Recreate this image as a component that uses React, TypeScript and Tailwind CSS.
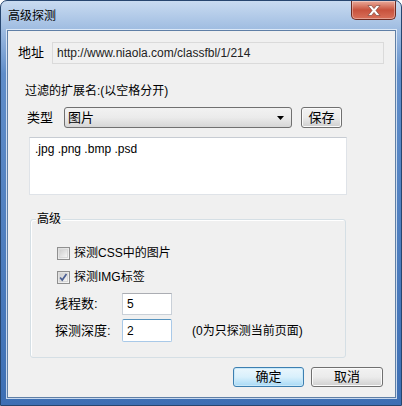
import React from 'react';

// Win7 style "高级探测" dialog

const FONT = { fontFamily: '"Liberation Sans", "Noto Sans CJK SC", sans-serif' };

function Checkbox({ checked }: { checked?: boolean }) {
  return (
    <span className="relative flex h-[13px] w-[13px] items-center justify-center border border-[#8f8f8f] bg-gradient-to-br from-[#dcdcdc] to-[#f8f8f8]">
      <span className="h-[9px] w-[9px] border border-[#d8d8d8] bg-gradient-to-br from-[#cfcfcf] to-[#f4f4f4]" />
      {checked && (
        <svg viewBox="0 0 13 13" className="absolute left-0 top-0 h-[11px] w-[11px]">
          <path d="M2.5 6.5 L5 9.5 L10 2.5" fill="none" stroke="#4b5f93" strokeWidth="2" />
        </svg>
      )}
    </span>
  );
}

function WinButton({ label, primary, className }: { label: string; primary?: boolean; className?: string }) {
  return (
    <div
      className={
        'flex items-center justify-center rounded-[3px] border text-[13px] text-black ' +
        (primary
          ? 'border-[#3c7fb1] bg-gradient-to-b from-[#eaf6fd] via-[#d9f0fc] to-[#a7d9f5] shadow-[inset_0_0_0_1px_#c9e8f8]'
          : 'border-[#707070] bg-gradient-to-b from-[#f2f2f2] via-[#ebebeb] to-[#cfcfcf] shadow-[inset_0_0_0_1px_#fbfbfb]') +
        ' ' +
        (className ?? '')
      }
    >
      {label}
    </div>
  );
}

export default function App() {
  return (
    <div
      style={FONT}
      className="h-[406px] w-[402px] overflow-hidden rounded-t-[7px] border border-[#27466f] bg-gradient-to-b from-[#c9dbf0] via-[#5f8dc9] via-[18%] to-[#3d6fb4] text-[12px] text-black"
    >
      {/* Title bar */}
      <div className="flex h-[29px] items-start justify-between">
        <div className="pl-[7px] pt-[7px] text-[12px] leading-[16px] text-black">高级探测</div>
        <div className="mr-[5px] flex h-[19px] w-[45px] items-center justify-center rounded-b-[5px] border border-t-0 border-[#6e2a20] bg-gradient-to-b from-[#e9a99a] via-[#c8523d] to-[#d9705a] shadow-[inset_0_0_0_1px_rgba(255,255,255,0.35)]">
          <svg viewBox="0 0 14 11" className="h-[11px] w-[14px]">
            <path
              d="M1 0.5 H4.5 L7 3.6 L9.5 0.5 H13 L8.9 5.5 L13 10.5 H9.5 L7 7.4 L4.5 10.5 H1 L5.1 5.5 Z"
              fill="#ffffff"
              stroke="#6d3a33"
              strokeWidth="0.6"
            />
          </svg>
        </div>
      </div>

      {/* Client area */}
      <div className="ml-[6px] h-[368px] w-[389px] border border-[#5f7fa6] bg-[#f0f0f0] shadow-[0_0_0_1px_rgba(235,243,252,0.8)]">
        {/* Address */}
        <div className="mt-[11px] flex h-[22px] items-center pl-[10px]">
          <span className="w-[34px] text-[13px]">地址</span>
          <div className="flex h-[22px] w-[332px] items-center border border-[#dadada] bg-[#f0f0f0] pl-[4px] text-[12px] text-[#222]">
            http://www.niaola.com/classfbl/1/214
          </div>
        </div>

        {/* Filter label */}
        <div className="mt-[19px] pl-[17px] leading-[16px]">过滤的扩展名:(以空格分开)</div>

        {/* Type row */}
        <div className="mt-[8px] flex h-[21px] items-center pl-[19px]">
          <span className="w-[37px] text-[13px]">类型</span>
          <div className="flex h-[21px] w-[228px] items-center justify-between rounded-[3px] border border-[#707070] bg-gradient-to-b from-[#f2f2f2] via-[#ebebeb] to-[#d6d6d6] pl-[3px] pr-[7px] text-[13px]">
            <span>图片</span>
            <svg viewBox="0 0 7 4" className="h-[4px] w-[7px]">
              <path d="M0 0 H7 L3.5 4 Z" fill="#000" />
            </svg>
          </div>
          <WinButton label="保存" className="ml-[9px] h-[21px] w-[41px]" />
        </div>

        {/* Extensions textarea */}
        <div className="ml-[21px] mt-[9px] h-[58px] w-[318px] border border-[#dfe3e8] border-t-[#c7ccd3] bg-white px-[5px] pt-[3px] text-[12px] leading-[16px]">
          .jpg .png .bmp .psd
        </div>

        {/* Advanced group */}
        <div className="relative ml-[22px] mt-[24px] h-[139px] w-[316px] rounded-[3px] border border-[#d5dfe5] pl-[26px] pt-[25px] shadow-[inset_1px_1px_0_#ffffff]">
          <span className="absolute -top-[9px] left-[5px] bg-[#f0f0f0] px-[1px] text-[12px] leading-[16px]">高级</span>

          <div className="flex h-[16px] items-center gap-[4px]">
            <Checkbox />
            <span>探测CSS中的图片</span>
          </div>
          <div className="mt-[8px] flex h-[16px] items-center gap-[4px]">
            <Checkbox checked />
            <span>探测IMG标签</span>
          </div>

          <div className="-ml-[2px] mt-[8px] flex h-[22px] items-center">
            <span className="w-[67px] text-[13px]">线程数:</span>
            <div className="flex h-[22px] w-[50px] items-center border border-[#c9d0d8] border-t-[#abadb3] bg-white pl-[4px]">5</div>
          </div>
          <div className="-ml-[2px] mt-[4px] flex h-[23px] items-center">
            <span className="w-[67px] text-[13px]">探测深度:</span>
            <div className="flex h-[23px] w-[50px] items-center rounded-[2px] border border-[#a9c9e8] border-t-[#5794bf] bg-white pl-[4px]">2</div>
            <span className="ml-[20px]">(0为只探测当前页面)</span>
          </div>
        </div>

        {/* Dialog buttons */}
        <div className="mt-[9px] flex justify-end gap-[7px] pr-[12px]">
          <WinButton label="确定" primary className="h-[20px] w-[71px]" />
          <WinButton label="取消" className="h-[20px] w-[72px]" />
        </div>
      </div>
    </div>
  );
}
